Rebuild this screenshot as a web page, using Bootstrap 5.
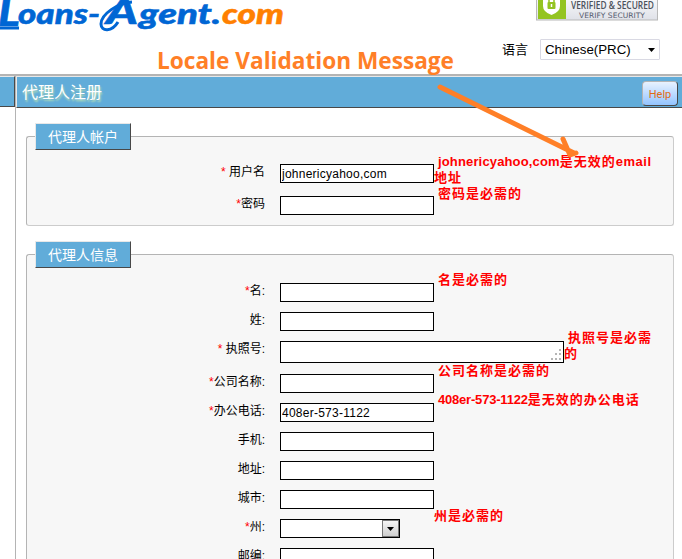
<!DOCTYPE html>
<html lang="zh-CN">
<head>
<meta charset="utf-8">
<meta name="viewport" content="width=device-width, initial-scale=1">
<title>Loans-Agent.com</title>
<link rel="stylesheet" href="https://cdn.jsdelivr.net/npm/bootstrap@5.3.0/dist/css/bootstrap.min.css">
<style>
body{font:13px/16px "Liberation Sans","Noto Sans CJK SC",sans-serif;color:#000;background:#fff;height:559px}
svg{display:block}
.top-area{height:74px}
.badge-box{margin-left:536px}
.lang-line{left:502px;top:39px}
.lang-line select{width:120px;height:21px;margin-left:12px;border:1px solid #d9d9e3;font:13.300px "Liberation Sans",sans-serif;padding:0 0 0 4px;color:#000;border-radius:1px;background:#fff;appearance:none}
.lang-arrow{right:5px;top:9px}
.main-area{height:485px;border-top:2px solid #b4b4b4}
.side-col{width:16px;border-right:1px solid #b4b4b4}
.side-tab{height:31px;background:#61acd9;border:1px solid #e8e8e8;border-left:0;border-right-color:#484848;border-bottom-color:#484848}
.page-title{height:32px;background:#61acd9;border:1px solid #e8e8e8;border-bottom-color:#484848;border-right:0;color:#fff;font-size:16px;padding-left:5px;text-shadow:1px 2px 2px #b5dfb5}
.help-btn{width:36px;height:25px;margin:4px 4px 0 0;border:1px solid #b4b4b4;border-right-color:#484848;border-bottom-color:#484848;border-radius:4px;background:linear-gradient(#e8f2ff,#93c4ff);color:#e16b12;font:11px/26px Roboto,sans-serif;padding:0;text-shadow:none}
.group{margin:0 8px 0 10px;border:1px solid #ccc;border-top-color:#b4b4b4;border-left-color:#b4b4b4;border-radius:3px;background:#f7f7f7}
.group-account{margin-top:28px;height:90px}
.group-info{margin-top:28px;height:340px}
.group-title{width:96px;height:27px;margin:-14px 0 0 8px;background:#61acd9;border:1px solid #e8e8e8;border-right-color:#484848;border-bottom-color:#484848;color:#fff;font-size:14px;line-height:26px;text-align:center}
.group-account .fields{padding-top:14px}
.group-info .fields{padding-top:15px}
.line{height:29px}
.line-acct{height:32px}
.line-tall{height:33px}
.cap{width:238px;margin-right:15px;text-align:right;font-size:12px;line-height:16px;flex:none}
.cap i{font-style:normal;color:#f00}
.field{width:154px;height:19px;border:1px solid #000;border-radius:0;padding:0 1px;background:#fff;font:12px/17px "Liberation Sans",sans-serif;letter-spacing:.25px;color:#000;flex:none}
.field:focus{outline:0}
textarea.field{width:284px;height:22px;resize:none;overflow:hidden;display:block}
.grip{right:2px;bottom:2px}
.state-box{width:120px;margin-right:34px}
.state-box select{width:120px;appearance:none}
.drop{width:17px;height:17px;right:1px;top:1px;border:1px solid #777;background:linear-gradient(#f5f5f5,#cfcfcf)}
.err{margin-top:-11px;width:225px;text-indent:4px;color:#f00;font-weight:700;line-height:16px;letter-spacing:1px}
.line-acct .err{margin-top:-10px}
.err-narrow{width:91px}
.state-box + .err{text-indent:0}
.mail{letter-spacing:.15px}
.mail-end{letter-spacing:.5px}
.phone{letter-spacing:-.2px}
.note{left:0;top:0;pointer-events:none}
</style>
<script src="https://cdn.jsdelivr.net/npm/bootstrap@5.3.0/dist/js/bootstrap.bundle.min.js"></script>
</head>
<body class="overflow-hidden position-relative">
<header class="top-area position-relative d-flex">
  <svg class="position-absolute start-0 top-0" width="300" height="46" font-family="Lato,sans-serif" font-weight="900" font-style="italic" fill="#0066d4" stroke="#0066d4" stroke-width=".5">
    <text x="-2" y="26" font-size="38" textLength="22" lengthAdjust="spacingAndGlyphs">L</text>
    <text x="18" y="24" font-size="28" textLength="82" lengthAdjust="spacingAndGlyphs">oans-</text>
    <text x="106" y="24" font-size="34" textLength="32" lengthAdjust="spacingAndGlyphs">A</text>
    <text x="139" y="24" font-size="28" textLength="82" lengthAdjust="spacingAndGlyphs">gent.</text>
    <text x="222" y="24" font-size="28" fill="#ff8000" stroke="#ff8000" textLength="62" lengthAdjust="spacingAndGlyphs">com</text>
    <path d="M0 28h19M132 2C118 3 101 14 101 24c0 8 11 8 17-2" fill="none" stroke-width="3"/>
  </svg>
  <div class="badge-box">
    <svg width="122" height="21">
      <defs><linearGradient id="bg" x2="0" y2="1"><stop stop-color="#fff"/><stop offset="1" stop-color="#dfe1e8"/></linearGradient></defs>
      <rect x=".5" y="-8" width="121" height="28" fill="url(#bg)" stroke="#b8b8b8"/>
      <path d="M2 0h28v19H2z" fill="#94c421"/>
      <path d="M7 0h17v6q0 6-8.500 9Q7 12 7 6z" fill="#fff"/>
      <rect x="11.500" y="2" width="8" height="7" rx="1" fill="#94c421"/>
      <path d="M13 2V0m5 2V0" stroke="#94c421" stroke-width="1.500"/>
      <path d="M15.500 4v3" stroke="#fff" stroke-width="1.500"/>
      <text x="35" y="8.500" font-family="Open Sans,sans-serif" font-size="10" font-weight="600" fill="#4b525b" textLength="83" lengthAdjust="spacingAndGlyphs">VERIFIED &amp; SECURED</text>
      <text x="43" y="18" font-family="DejaVu Sans,sans-serif" font-size="7.500" fill="#555b6d" textLength="66" lengthAdjust="spacingAndGlyphs">VERIFY SECURITY</text>
    </svg>
  </div>
  <label class="lang-line position-absolute d-flex align-items-center">语言
    <span class="position-relative"><select><option>Chinese(PRC)</option></select>
      <svg class="lang-arrow position-absolute" width="7" height="4"><path d="M0 0h7L3.500 4z"/></svg></span>
  </label>
</header>
<main class="main-area d-flex overflow-hidden">
  <aside class="side-col flex-shrink-0"><div class="side-tab"></div></aside>
  <section class="flex-grow-1">
    <div class="page-title d-flex justify-content-between">
      <span class="lh-base pt-1">代理人注册</span>
      <button class="help-btn">Help</button>
    </div>
    <div class="group group-account">
      <div class="group-title">代理人帐户</div>
      <div class="fields">
        <div class="line-acct d-flex align-items-start"><label class="cap"><i>*</i> 用户名</label><input class="field" value="johnericyahoo,com"><div class="err"><span class="mail">johnericyahoo,com</span>是无效的<span class="mail-end">email</span><br>地址</div></div>
        <div class="line-acct d-flex align-items-start"><label class="cap"><i>*</i>密码</label><input class="field" type="password"><div class="err">密码是必需的</div></div>
      </div>
    </div>
    <div class="group group-info">
      <div class="group-title">代理人信息</div>
      <div class="fields">
        <div class="line d-flex align-items-start"><label class="cap"><i>*</i>名:</label><input class="field"><div class="err">名是必需的</div></div>
        <div class="line d-flex align-items-start"><label class="cap">姓:</label><input class="field"></div>
        <div class="line-tall d-flex align-items-start"><label class="cap"><i>*</i> 执照号:</label>
          <div class="position-relative"><textarea class="field"></textarea>
            <svg class="grip position-absolute" width="12" height="12" fill="#b5b5b5"><path d="M9 0h2v2H9zM5 4h2v2H5zm4 0h2v2H9zM1 9h2v2H1zm4 0h2v2H5zm4 0h2v2H9z"/></svg></div>
          <div class="err err-narrow">执照号是必需的</div></div>
        <div class="line d-flex align-items-start"><label class="cap"><i>*</i>公司名称:</label><input class="field"><div class="err">公司名称是必需的</div></div>
        <div class="line d-flex align-items-start"><label class="cap"><i>*</i>办公电话:</label><input class="field" value="408er-573-1122"><div class="err"><span class="phone">408er-573-1122</span>是无效的办公电话</div></div>
        <div class="line d-flex align-items-start"><label class="cap">手机:</label><input class="field"></div>
        <div class="line d-flex align-items-start"><label class="cap">地址:</label><input class="field"></div>
        <div class="line d-flex align-items-start"><label class="cap">城市:</label><input class="field"></div>
        <div class="line d-flex align-items-start"><label class="cap"><i>*</i>州:</label>
          <div class="state-box position-relative"><select class="field"></select><span class="drop position-absolute d-flex align-items-center justify-content-center"><svg width="7" height="4"><path d="M0 0h7L3.500 4z"/></svg></span></div>
          <div class="err">州是必需的</div></div>
        <div class="line d-flex align-items-start"><label class="cap">邮编:</label><input class="field"></div>
      </div>
    </div>
  </section>
</main>
<svg class="note position-absolute" width="682" height="200">
  <text x="157" y="69" font-family="Open Sans,sans-serif" font-size="24" font-weight="700" fill="#ff7f27" textLength="297" lengthAdjust="spacingAndGlyphs">Locale Validation Message</text>
  <path d="M440 87l134 66M563 139l7 16 6-2" fill="none" stroke="#ff7f27" stroke-width="5" stroke-linecap="round" stroke-linejoin="round"/>
</svg>
</body>
</html>
